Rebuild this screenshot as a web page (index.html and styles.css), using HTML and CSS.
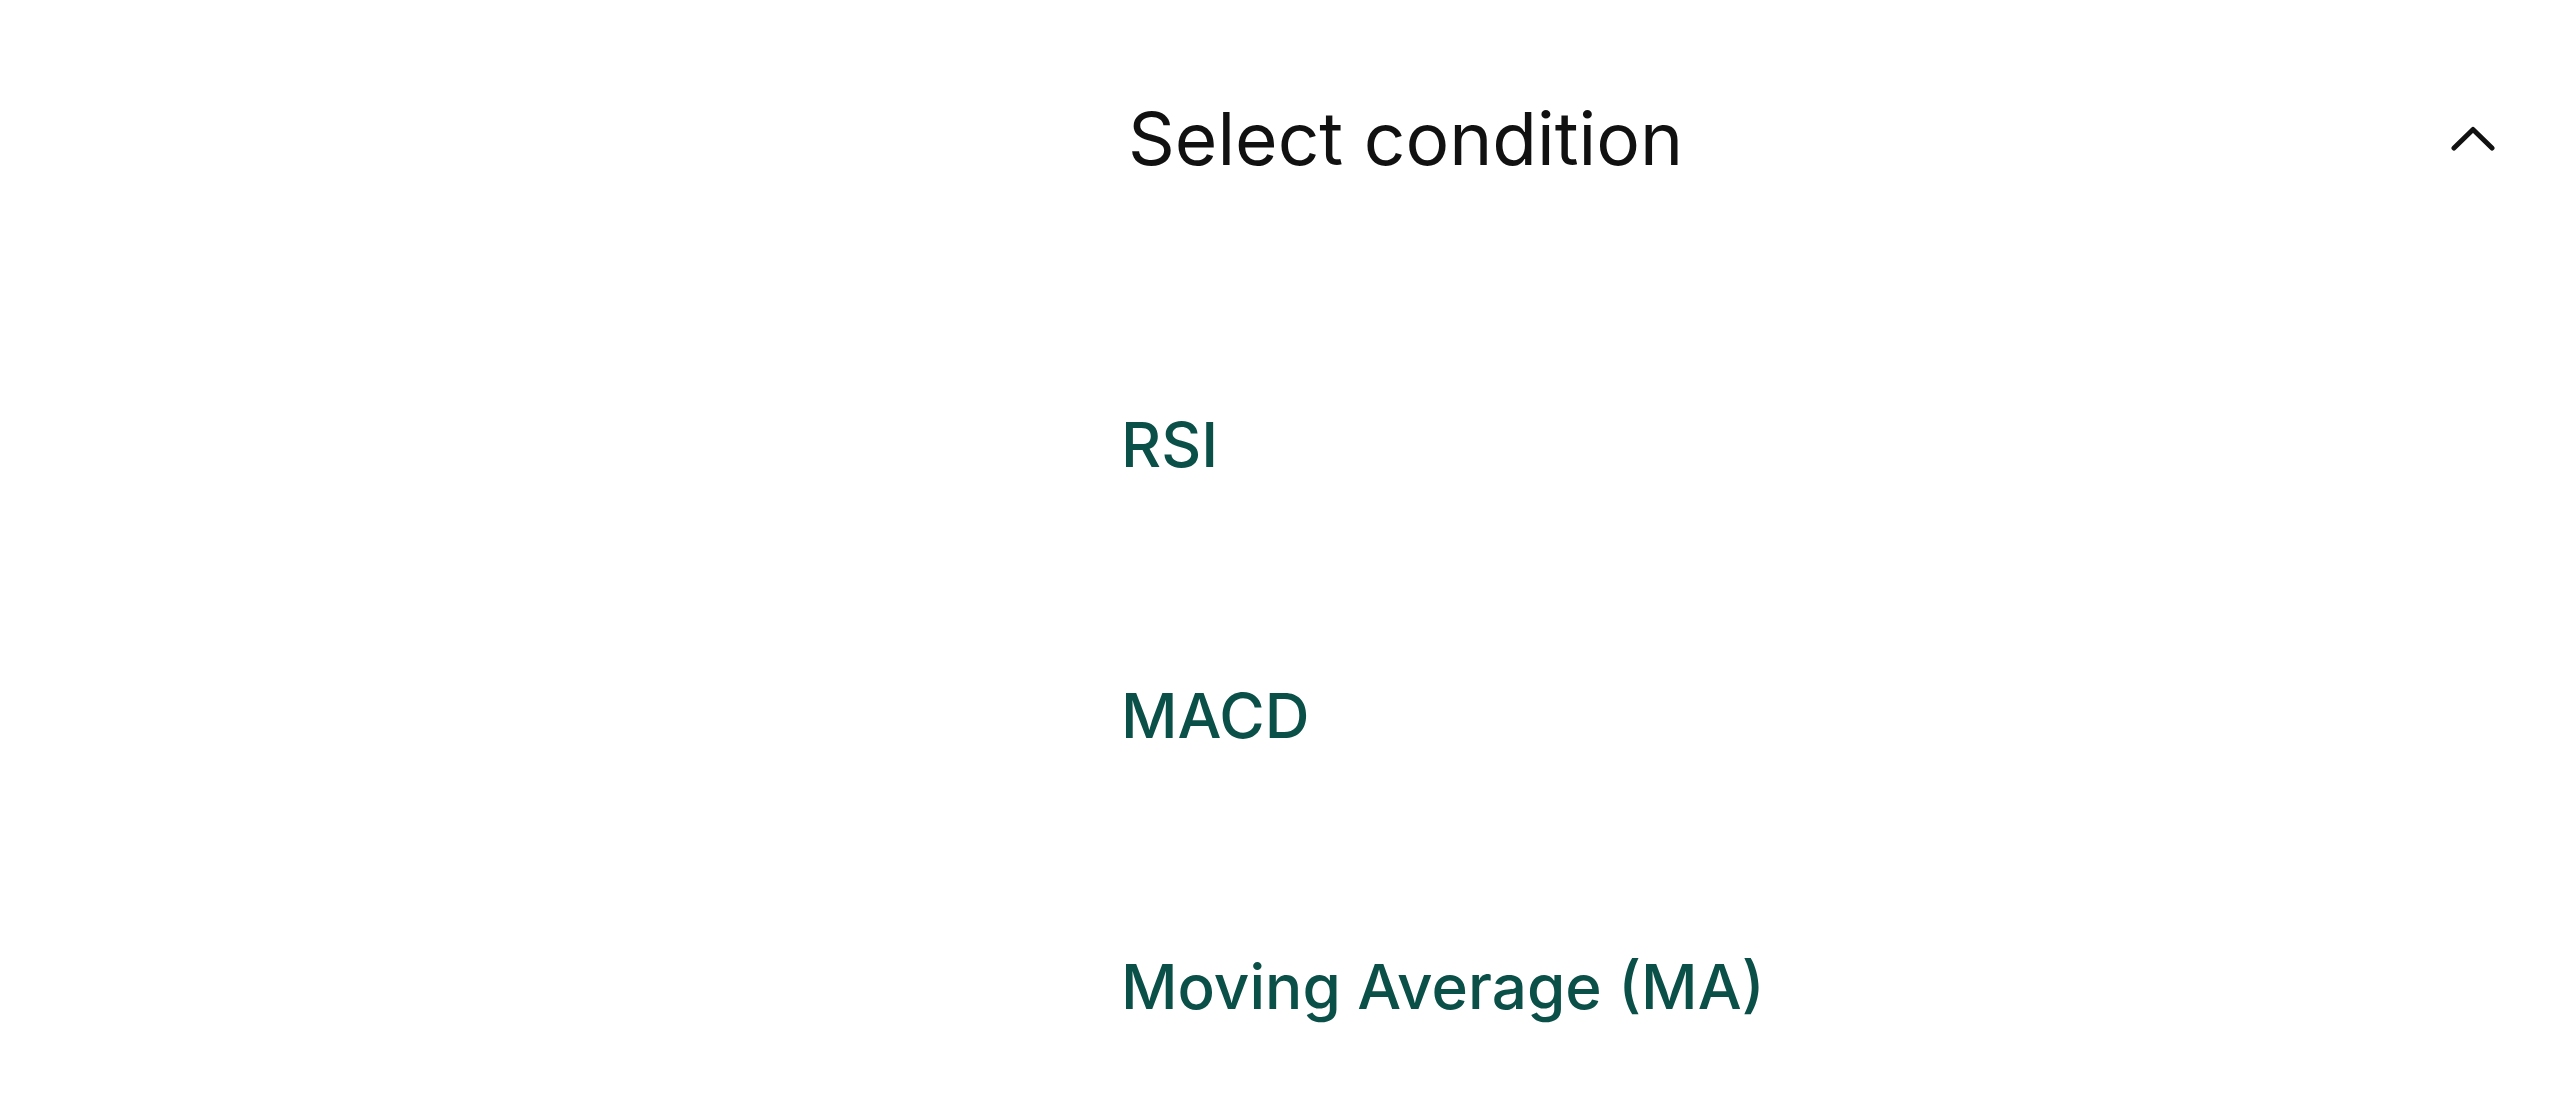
FILE: index.html
```html
<!DOCTYPE html>
<html lang="en">
<head>
<meta charset="utf-8">
<title>Select condition</title>
<link rel="stylesheet" href="styles.css">
</head>
<body>
<div class="page">
  <div class="spacer"></div>
  <section class="panel">
    <header class="panel-header">
      <h2 class="panel-title">Select condition</h2>
      <svg class="chevron" width="44" height="28" viewBox="0 0 44 28" aria-hidden="true">
        <path d="M3 24 L22 5.5 L41 24" fill="none" stroke="#111" stroke-width="5" stroke-linecap="round" stroke-linejoin="round"/>
      </svg>
    </header>
    <ul class="options">
      <li class="option">RSI</li>
      <li class="option">MACD</li>
      <li class="option">Moving Average (MA)</li>
    </ul>
  </section>
</div>
</body>
</html>
```

FILE: styles.css
```css
html, body {
  margin: 0;
  padding: 0;
  background: #ffffff;
}
body {
  font-family: Inter, "Noto Sans", "Liberation Sans", sans-serif;
  height: 1104px;
  overflow: hidden;
}
.page {
  display: grid;
  grid-template-columns: 1121px 1fr;
  padding-right: 65px;
}
.panel {
  display: flex;
  flex-direction: column;
}
.panel-header {
  height: 276px;
  display: flex;
  align-items: center;
  justify-content: space-between;
}
.panel-title {
  margin: 0;
  padding-left: 7px;
  font-size: 73px;
  font-weight: 400;
  color: #111111;
  letter-spacing: 0;
}
.chevron {
  display: block;
}
.options {
  list-style: none;
  margin: 33px 0 0;
  padding: 0;
}
.option {
  height: 271px;
  display: flex;
  align-items: center;
  font-size: 62px;
  font-weight: 500;
  color: #0b5048;
  letter-spacing: 0;
}
```
